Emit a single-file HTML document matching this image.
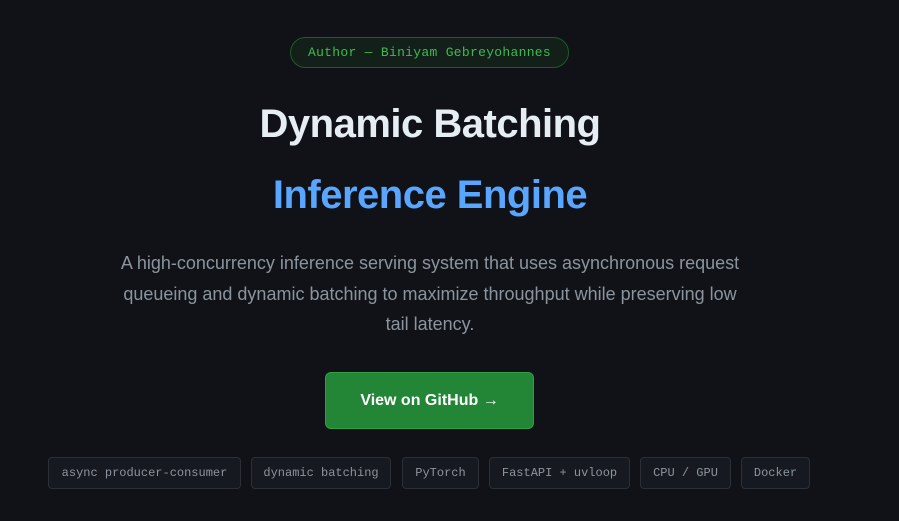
<!DOCTYPE html>
<html><head><meta charset="utf-8"><style>
html,body{margin:0;padding:0;background:#111217;width:899px;height:521px;overflow:hidden;font-family:"Liberation Sans",sans-serif}
.badge{position:absolute;left:290px;top:37px;width:277px;height:29px;border:1px solid #1f5a2a;background:#13201a;border-radius:16px;color:#3fb950;font:13px "Liberation Mono",monospace;text-align:center;line-height:29px;letter-spacing:0.3px}
h1{position:absolute;left:0;width:860px;text-align:center;margin:0;font-weight:700;font-size:40px;letter-spacing:-0.5px}
.t1{top:102px;color:#e6edf3}
.t2{top:173px;color:#58a6ff}
p{position:absolute;left:112px;width:636px;top:248px;margin:0;text-align:center;color:#8b949e;font-size:18px;line-height:30.5px}
.btn{position:absolute;left:325px;top:372px;width:207px;height:55px;border:1px solid #2ea043;background:#238636;border-radius:6px;color:#fff;font-size:16px;font-weight:700;text-align:center;line-height:55px}
.tag{position:absolute;top:457px;height:30px;border:1px solid #2b3036;background:#161a20;border-radius:4px;color:#8b949e;font:12px "Liberation Mono",monospace;line-height:30px;text-align:center}
</style></head><body>
<div class="badge">Author — Biniyam Gebreyohannes</div>
<h1 class="t1">Dynamic Batching</h1>
<h1 class="t2">Inference Engine</h1>
<p>A high-concurrency inference serving system that uses asynchronous request queueing and dynamic batching to maximize throughput while preserving low<br>tail latency.</p>
<div class="btn">View on GitHub →</div>
<div class="tag" style="left:48px;width:191px">async producer-consumer</div>
<div class="tag" style="left:251px;width:138px">dynamic batching</div>
<div class="tag" style="left:402px;width:75px">PyTorch</div>
<div class="tag" style="left:489px;width:139px">FastAPI + uvloop</div>
<div class="tag" style="left:640px;width:89px">CPU / GPU</div>
<div class="tag" style="left:741px;width:67px">Docker</div>
</body></html>
